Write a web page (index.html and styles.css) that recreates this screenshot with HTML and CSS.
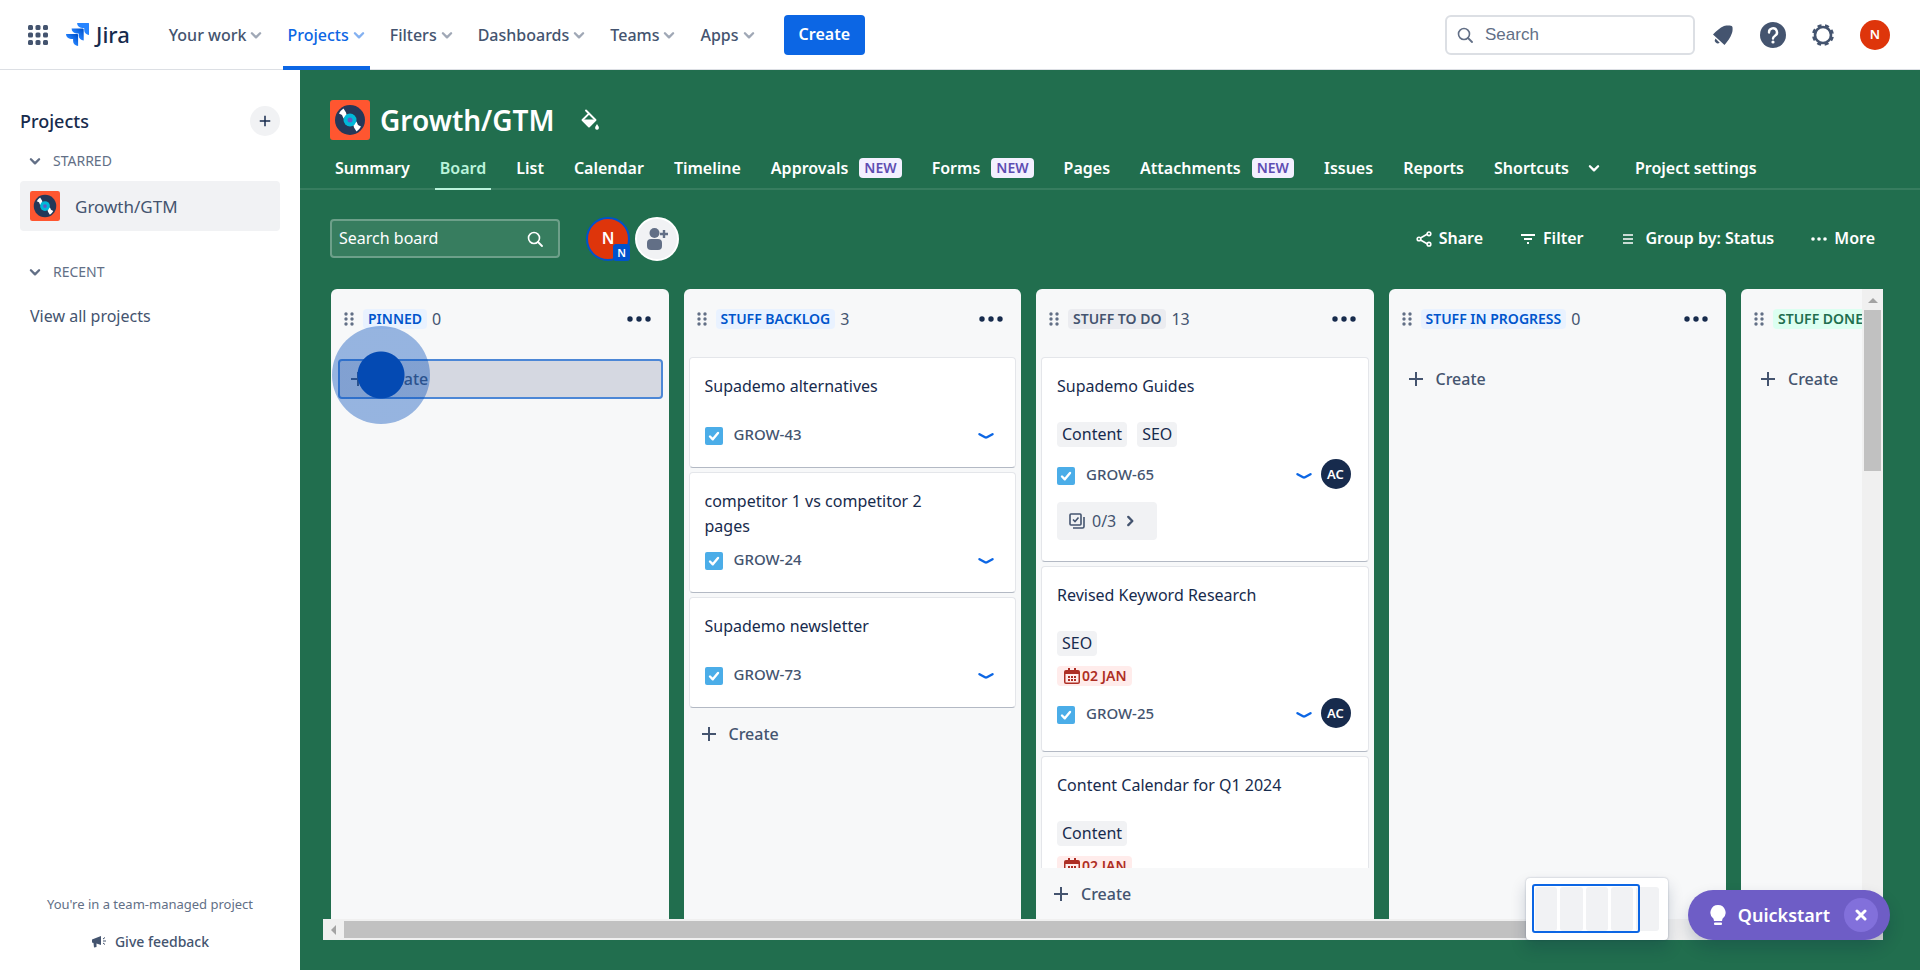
FILE: index.html
```html
<!DOCTYPE html>
<html lang="en">
<head>
    <meta charset="UTF-8" />
    <meta name="viewport" content="width=device-width, initial-scale=1" />
    <title>Growth/GTM - Board - Jira</title>
    <link rel="stylesheet" href="styles.css">
</head>
<body>

<!-- shared icons -->
<svg class="sprite" aria-hidden="true">
    <symbol id="chevron" viewBox="0 0 12 12"><path d="M2.500 4.500L6 8l3.500-3.500" fill="none" stroke="currentColor" stroke-width="2" stroke-linecap="round" stroke-linejoin="round"/></symbol>
    <symbol id="plus" viewBox="0 0 16 16"><path d="M8 1v14M1 8h14" fill="none" stroke="currentColor" stroke-width="2"/></symbol>
    <symbol id="search" viewBox="0 0 16 16"><circle cx="7" cy="7" r="5.5" fill="none" stroke="currentColor" stroke-width="1.6"/><path d="M11 11l4 4" stroke="currentColor" stroke-width="1.8" stroke-linecap="round"/></symbol>
    <symbol id="grip" viewBox="0 0 10 16"><g fill="#626f86"><circle cx="2" cy="3" r="1.7"/><circle cx="8" cy="3" r="1.7"/><circle cx="2" cy="8" r="1.7"/><circle cx="8" cy="8" r="1.7"/><circle cx="2" cy="13" r="1.7"/><circle cx="8" cy="13" r="1.7"/></g></symbol>
    <symbol id="dots" viewBox="0 0 24 6"><g fill="currentColor"><circle cx="3" cy="3" r="2.7"/><circle cx="12" cy="3" r="2.7"/><circle cx="21" cy="3" r="2.7"/></g></symbol>
    <symbol id="task" viewBox="0 0 18 18"><rect width="18" height="18" rx="2" fill="#4bade8"/><path d="M5 9.5l2.8 2.8L13 6" fill="none" stroke="#fff" stroke-width="2.4" stroke-linecap="round" stroke-linejoin="round"/></symbol>
    <symbol id="low" viewBox="0 0 16 8"><path d="M1.500 2.200L7 5.300q1 .5 2 0l5.500-3.100" fill="none" stroke="#0c66e4" stroke-width="2.400" stroke-linecap="round"/></symbol>
    <symbol id="calendar" viewBox="0 0 16 16"><path d="M4 0h2v2h4V0h2v2h2a2 2 0 0 1 2 2v10a2 2 0 0 1-2 2H2a2 2 0 0 1-2-2V4a2 2 0 0 1 2-2h2zM1.500 6v8q0 .5.5.5h12q.5 0 .5-.5V6z" fill="#ae2e24" fill-rule="evenodd"/><path d="M4 9h8M4 12h8" stroke="#ae2e24" stroke-width="1.800" stroke-dasharray="2 1"/></symbol>
    <symbol id="record" viewBox="0 0 40 40">
        <rect width="40" height="40" rx="3" fill="#ff5630"/>
        <circle cx="20" cy="20" r="15" fill="#253858"/>
        <path d="M9 13.500q1.500-3 4.500-5l2.500 4 1 4-3.500 2-1.500-3.500zM31 26.500q-1.500 3-4.500 5l-2.500-4-1-4 3.500-2 1.500 3.500z" fill="#fff"/>
        <circle cx="20" cy="20" r="6.500" fill="#00b8d9"/>
        <circle cx="20" cy="20" r="2.500" fill="#5e5bc7"/>
    </symbol>
</svg>

<header class="topbar">
    <button class="icon-btn switcher" aria-label="Switch to">
        <svg width="20" height="20" viewBox="0 0 20 20" fill="#44546f"><rect width="5" height="5" rx="1.500"/><rect x="7.500" width="5" height="5" rx="1.500"/><rect x="15" width="5" height="5" rx="1.500"/><rect y="7.500" width="5" height="5" rx="1.500"/><rect x="7.500" y="7.500" width="5" height="5" rx="1.500"/><rect x="15" y="7.500" width="5" height="5" rx="1.500"/><rect y="15" width="5" height="5" rx="1.500"/><rect x="7.500" y="15" width="5" height="5" rx="1.500"/><rect x="15" y="15" width="5" height="5" rx="1.500"/></svg>
    </button>
    <a class="logo" href="#">
        <svg width="23" height="23" viewBox="0 0 23 23" aria-hidden="true">
            <defs>
                <linearGradient id="g1" x1="1" y1="0" x2="0.400" y2="0.600"><stop offset="0.150" stop-color="#0052cc"/><stop offset="1" stop-color="#2684ff"/></linearGradient>
            </defs>
            <path d="M22.300 0H11.100a5 5 0 0 0 5 5h2.100v2a5 5 0 0 0 5 5V1a1 1 0 0 0-.9-1z" fill="#2684ff"/>
            <path d="M16.800 5.500H5.600a5 5 0 0 0 5 5h2.100v2a5 5 0 0 0 5 5V6.500a1 1 0 0 0-.9-1z" fill="url(#g1)"/>
            <path d="M11.200 11H0a5 5 0 0 0 5 5h2.100v2a5 5 0 0 0 5 5V12a1 1 0 0 0-.9-1z" fill="url(#g1)"/>
        </svg>
        <span>Jira</span>
    </a>
    <nav class="topnav">
        <a href="#">Your work <svg class="chev"><use href="#chevron"/></svg></a>
        <a href="#" class="active">Projects <svg class="chev"><use href="#chevron"/></svg></a>
        <a href="#">Filters <svg class="chev"><use href="#chevron"/></svg></a>
        <a href="#">Dashboards <svg class="chev"><use href="#chevron"/></svg></a>
        <a href="#">Teams <svg class="chev"><use href="#chevron"/></svg></a>
        <a href="#">Apps <svg class="chev"><use href="#chevron"/></svg></a>
    </nav>
    <button class="create-btn">Create</button>
    <div class="topbar-right">
        <label class="search">
            <svg width="16" height="16"><use href="#search"/></svg>
            <input type="text" placeholder="Search" aria-label="Search">
        </label>
        <button class="icon-btn" aria-label="Notifications">
            <svg width="24" height="24" viewBox="0 0 24 24" fill="#44546f"><path d="M2 11.500C5 8.500 9 4.500 13 3c3-.7 5-.6 7-.3q1.300.3 1.500 1.500c.2 2 .2 4-.7 6.300-1.300 4-4.300 8-7.300 11.500z"/><path d="M4.500 15.500a3 3 0 0 0 4.200 4.200z"/></svg>
        </button>
        <button class="icon-btn" aria-label="Help">
            <svg width="26" height="26" viewBox="0 0 26 26"><circle cx="13" cy="13" r="13" fill="#44546f"/><path d="M9 10.500a4 4 0 1 1 6 3.300c-1.400.9-2 1.200-2 2.700" fill="none" stroke="#fff" stroke-width="2.400" stroke-linecap="round"/><circle cx="13" cy="20" r="1.600" fill="#fff"/></svg>
        </button>
        <button class="icon-btn" aria-label="Settings">
            <svg width="24" height="24" viewBox="0 0 24 24"><circle cx="12" cy="12" r="8" fill="none" stroke="#44546f" stroke-width="2.600"/><circle cx="12" cy="12" r="9.550" fill="none" stroke="#44546f" stroke-width="2.800" stroke-dasharray="4 3.500" stroke-dashoffset="-1.750"/></svg>
        </button>
        <button class="avatar profile" aria-label="Your profile">N</button>
    </div>
</header>

<div class="layout">
    <aside class="sidebar">
        <div class="sidebar-head">
            <h2>Projects</h2>
            <button class="add-btn" aria-label="Create project"><svg width="12" height="12"><use href="#plus"/></svg></button>
        </div>
        <button class="group-head"><svg class="chev"><use href="#chevron"/></svg>STARRED</button>
        <a class="project-link" href="#"><svg width="30" height="30"><use href="#record"/></svg>Growth/GTM</a>
        <button class="group-head recent"><svg class="chev"><use href="#chevron"/></svg>RECENT</button>
        <a class="view-all" href="#">View all projects</a>
        <div class="sidebar-foot">
            <p>You're in a team-managed project</p>
            <button class="feedback">
                <svg width="16" height="14" viewBox="0 0 16 14" fill="#44546f"><path d="M1 4.500L10 1v9L5.500 8.500V12L3 12.500 2.500 8 1 7.500z"/><path d="M12 4l2-1.500M12 6h3M12 8l2 1.500" stroke="#44546f"/></svg>
                Give feedback
            </button>
        </div>
    </aside>

    <main class="main">
        <div class="title-row">
            <svg width="40" height="40"><use href="#record"/></svg>
            <h1>Growth/GTM</h1>
            <button class="icon-btn" aria-label="Change background">
                <svg width="20" height="22" viewBox="0 0 20 22"><path d="M6 1.500l9.500 9.500-6.500 6.500L2.500 11l6.200-6.200" fill="none" stroke="#fff" stroke-width="1.900" stroke-linejoin="round" stroke-linecap="round"/><path d="M2.500 10.500h13L9 17.500z" fill="#fff"/><path d="M17 15q2.300 3 1.800 4.400a1.900 1.900 0 0 1-3.600 0q-.4-1.400 1.800-4.400z" fill="#fff"/></svg>
            </button>
        </div>
        <nav class="tabs">
            <a href="#">Summary</a>
            <a href="#" class="active">Board</a>
            <a href="#">List</a>
            <a href="#">Calendar</a>
            <a href="#">Timeline</a>
            <a href="#">Approvals<span class="new">NEW</span></a>
            <a href="#">Forms<span class="new">NEW</span></a>
            <a href="#">Pages</a>
            <a href="#">Attachments<span class="new">NEW</span></a>
            <a href="#">Issues</a>
            <a href="#">Reports</a>
            <a href="#" class="shortcuts">Shortcuts<svg class="chev"><use href="#chevron"/></svg></a>
            <a href="#">Project settings</a>
        </nav>

        <div class="toolbar">
            <label class="board-search">
                <input type="text" placeholder="Search board" aria-label="Search board">
                <svg width="16" height="16"><use href="#search"/></svg>
            </label>
            <button class="avatar member" aria-label="Filter by N">N<span class="member-badge">N</span></button>
            <button class="avatar add-people" aria-label="Add people">
                <svg width="22" height="24" viewBox="0 0 22 24" fill="#626f86"><circle cx="8.500" cy="6" r="5"/><rect x="1" y="12" width="15" height="11" rx="4"/><path d="M18 3v8M14 7h8" stroke="#626f86" stroke-width="2.400"/></svg>
            </button>
            <div class="actions">
                <button><svg width="16" height="16" viewBox="0 0 16 16" fill="none" stroke="#fff" stroke-width="1.600"><path d="M11.500 3L4.500 7M4.500 9l7 4"/><circle cx="13" cy="2.800" r="1.800"/><circle cx="3" cy="8" r="1.800"/><circle cx="13" cy="13.200" r="1.800"/></svg>Share</button>
                <button><svg width="16" height="16" viewBox="0 0 16 16" stroke="#fff" stroke-width="1.800"><path d="M1 4h14M4 8h8M7 12h2"/></svg>Filter</button>
                <button class="group-by"><svg width="10" height="10" viewBox="0 0 10 10" stroke="#fff" stroke-width="1.500"><path d="M0 1h10M0 5h10M0 9h10"/></svg>Group by: Status</button>
                <button><svg width="16" height="4"><use href="#dots"/></svg>More</button>
            </div>
        </div>

        <div class="board-frame">
            <div class="columns">
                <section class="column">
                    <header class="column-head">
                        <svg width="10" height="16"><use href="#grip"/></svg>
                        <h3 class="status blue">PINNED</h3><span class="count">0</span>
                        <button class="column-menu" aria-label="Column actions"><svg width="24" height="6"><use href="#dots"/></svg></button>
                    </header>
                    <button class="column-create focused"><svg width="16" height="16"><use href="#plus"/></svg>Create<span class="click-marker"></span></button>
                </section>

                <section class="column">
                    <header class="column-head">
                        <svg width="10" height="16"><use href="#grip"/></svg>
                        <h3 class="status blue">STUFF BACKLOG</h3><span class="count">3</span>
                        <button class="column-menu" aria-label="Column actions"><svg width="24" height="6"><use href="#dots"/></svg></button>
                    </header>
                    <div class="cards">
                        <article class="card">
                            <p class="card-title">Supademo alternatives</p>
                            <div class="card-row"><svg class="task"><use href="#task"/></svg><a href="#">GROW-43</a><svg class="low"><use href="#low"/></svg></div>
                        </article>
                        <article class="card">
                            <p class="card-title">competitor 1 vs competitor 2 pages</p>
                            <div class="card-row"><svg class="task"><use href="#task"/></svg><a href="#">GROW-24</a><svg class="low"><use href="#low"/></svg></div>
                        </article>
                        <article class="card">
                            <p class="card-title">Supademo newsletter</p>
                            <div class="card-row"><svg class="task"><use href="#task"/></svg><a href="#">GROW-73</a><svg class="low"><use href="#low"/></svg></div>
                        </article>
                    </div>
                    <button class="column-create"><svg width="16" height="16"><use href="#plus"/></svg>Create</button>
                </section>

                <section class="column">
                    <header class="column-head">
                        <svg width="10" height="16"><use href="#grip"/></svg>
                        <h3 class="status grey">STUFF TO DO</h3><span class="count">13</span>
                        <button class="column-menu" aria-label="Column actions"><svg width="24" height="6"><use href="#dots"/></svg></button>
                    </header>
                    <div class="cards">
                        <article class="card">
                            <p class="card-title">Supademo Guides</p>
                            <div class="tags"><span>Content</span><span>SEO</span></div>
                            <div class="card-row"><svg class="task"><use href="#task"/></svg><a href="#">GROW-65</a><svg class="low"><use href="#low"/></svg><span class="avatar assignee">AC</span></div>
                            <button class="subtasks">
                                <svg width="16" height="16" viewBox="0 0 16 16" fill="none" stroke="#44546f" stroke-width="1.600"><rect x="1" y="1" width="11" height="11" rx="1"/><path d="M4 6.500l2 2 3.500-4M15 4v9.500q0 1.500-1.500 1.500H4"/></svg>
                                0/3
                                <svg class="chev next"><use href="#chevron"/></svg>
                            </button>
                        </article>
                        <article class="card">
                            <p class="card-title">Revised Keyword Research</p>
                            <div class="tags"><span>SEO</span></div>
                            <div class="due"><svg width="16" height="16"><use href="#calendar"/></svg>02 JAN</div>
                            <div class="card-row"><svg class="task"><use href="#task"/></svg><a href="#">GROW-25</a><svg class="low"><use href="#low"/></svg><span class="avatar assignee">AC</span></div>
                        </article>
                        <article class="card">
                            <p class="card-title">Content Calendar for Q1 2024</p>
                            <div class="tags"><span>Content</span></div>
                            <div class="due"><svg width="16" height="16"><use href="#calendar"/></svg>02 JAN</div>
                        </article>
                    </div>
                    <button class="column-create"><svg width="16" height="16"><use href="#plus"/></svg>Create</button>
                </section>

                <section class="column">
                    <header class="column-head">
                        <svg width="10" height="16"><use href="#grip"/></svg>
                        <h3 class="status blue">STUFF IN PROGRESS</h3><span class="count">0</span>
                        <button class="column-menu" aria-label="Column actions"><svg width="24" height="6"><use href="#dots"/></svg></button>
                    </header>
                    <button class="column-create"><svg width="16" height="16"><use href="#plus"/></svg>Create</button>
                </section>

                <section class="column">
                    <header class="column-head">
                        <svg width="10" height="16"><use href="#grip"/></svg>
                        <h3 class="status green">STUFF DONE</h3>
                    </header>
                    <button class="column-create"><svg width="16" height="16"><use href="#plus"/></svg>Create</button>
                </section>
            </div>
            <div class="scroll-y"><svg width="10" height="5" viewBox="0 0 10 5"><path d="M0 5l5-5 5 5z" fill="#a3a3a3"/></svg><div class="thumb"></div></div>
            <div class="scroll-x"><svg width="5" height="10" viewBox="0 0 5 10"><path d="M5 0L0 5l5 5z" fill="#a3a3a3"/></svg><div class="thumb"></div></div>
            <div class="scroll-corner"></div>
        </div>

        <div class="floating">
            <div class="minimap">
                <span></span><span></span><span></span><span></span><span></span>
                <div class="minimap-view"></div>
            </div>
            <div class="quickstart">
                <button class="quickstart-open">
                    <svg width="16" height="20" viewBox="0 0 16 20" fill="#fff"><path d="M8 0a7.600 7.600 0 0 1 4.500 13.700L12 16H4l-.5-2.300A7.600 7.600 0 0 1 8 0z"/><rect x="4" y="17.500" width="8" height="2.500" rx="1"/></svg>
                    Quickstart
                </button>
                <button class="quickstart-close" aria-label="Close"><svg width="12" height="12" viewBox="0 0 12 12"><path d="M2 2l8 8M10 2l-8 8" stroke="#fff" stroke-width="3" stroke-linecap="round"/></svg></button>
            </div>
        </div>
    </main>
</div>
</body>
</html>
```

FILE: styles.css
```css
* {
    box-sizing: border-box;
}
body {
    margin: 0;
    height: 100vh;
    display: flex;
    flex-direction: column;
    overflow: hidden;
    font-family: "Noto Sans", "Open Sans", sans-serif;
    font-size: 16px;
    line-height: 25px;
    color: #172b4d;
    background-color: #fff;
}
h1, h2, h3, p {
    margin: 0;
}
a {
    color: inherit;
    text-decoration: none;
}
button {
    font: inherit;
    color: inherit;
    background: none;
    border: none;
    padding: 0;
    cursor: pointer;
}
svg {
    display: block;
    flex: none;
}
.sprite {
    position: absolute;
    width: 0;
    height: 0;
}
.chev {
    width: 14px;
    height: 14px;
}
.icon-btn {
    display: flex;
    align-items: center;
    justify-content: center;
}
.avatar {
    display: flex;
    align-items: center;
    justify-content: center;
    border-radius: 50%;
    color: #fff;
    font-weight: 600;
}

/* top bar */
.topbar {
    display: flex;
    align-items: center;
    height: 70px;
    flex: none;
    padding: 0 30px 0 28px;
    border-bottom: 1px solid #dcdfe4;
}
.logo {
    display: flex;
    align-items: center;
    gap: 7px;
    margin: 0 35px 0 18px;
    font-size: 22px;
    font-weight: 500;
}
.topnav {
    display: flex;
    align-self: stretch;
    gap: 16px;
    color: #44546f;
    font-weight: 500;
}
.topnav a {
    display: flex;
    align-items: center;
    gap: 3px;
    padding: 4px 4px 0;
    margin-bottom: -1px;
    border-bottom: 4px solid transparent;
}
.topnav .chev {
    opacity: 0.5;
}
.topnav .active {
    color: #0c66e4;
    border-bottom-color: #0c66e4;
}
.create-btn {
    height: 40px;
    margin-left: 24px;
    padding: 0 15px;
    border-radius: 4px;
    background-color: #0c66e4;
    color: #fff;
    font-weight: 600;
}
.topbar-right {
    display: flex;
    align-items: center;
    gap: 25px;
    margin-left: auto;
}
.search {
    display: flex;
    align-items: center;
    gap: 12px;
    width: 250px;
    height: 40px;
    margin-right: -9px;
    padding: 0 10px;
    border: 2px solid #dcdfe4;
    border-radius: 6px;
    color: #626f86;
}
.search input {
    width: 100%;
    border: none;
    outline: none;
    background: none;
    padding: 0;
    font: 17px "Liberation Sans", Arial, sans-serif;
}
.search input::placeholder {
    color: #626f86;
}
.profile {
    width: 30px;
    height: 30px;
    background-color: #de350b;
    font-size: 13px;
}

/* sidebar */
.layout {
    display: flex;
    flex: 1;
    min-height: 0;
}
.sidebar {
    display: flex;
    flex-direction: column;
    width: 300px;
    flex: none;
    padding: 36px 20px 16px;
}
.sidebar-head {
    display: flex;
    align-items: center;
    justify-content: space-between;
}
.sidebar-head h2 {
    font-size: 18px;
    font-weight: 500;
}
.add-btn {
    display: flex;
    align-items: center;
    justify-content: center;
    width: 30px;
    height: 30px;
    border-radius: 50%;
    background-color: #f1f2f4;
}
.group-head {
    display: flex;
    align-items: center;
    gap: 11px;
    padding: 0 8px;
    margin: 12px 0 8px;
    color: #626f86;
    font-size: 14px;
}
.recent {
    margin-top: 28px;
}
.project-link {
    display: flex;
    align-items: center;
    gap: 15px;
    height: 50px;
    padding: 0 10px;
    border-radius: 4px;
    background-color: #f1f2f4;
    color: #44546f;
    font-size: 17px;
}
.view-all {
    padding: 12px 10px;
    color: #44546f;
}
.sidebar-foot {
    display: flex;
    flex-direction: column;
    align-items: center;
    gap: 12px;
    margin-top: auto;
    color: #626f86;
    font-size: 13px;
}
.feedback {
    display: flex;
    align-items: center;
    gap: 8px;
    color: #44546f;
    font-size: 14px;
    font-weight: 500;
}

/* project header */
.main {
    position: relative;
    display: flex;
    flex-direction: column;
    flex: 1;
    min-width: 0;
    padding-bottom: 30px;
    background-color: #216e4e;
    color: #fff;
}
.title-row {
    display: flex;
    align-items: center;
    gap: 10px;
    height: 70px;
    padding: 30px 30px 0;
}
.title-row h1 {
    margin-right: 15px;
    font-size: 28px;
    font-weight: 600;
}
.tabs {
    display: flex;
    gap: 20px;
    height: 50px;
    padding: 0 30px;
    border-bottom: 2px solid #377d5f;
    font-weight: 600;
    white-space: nowrap;
}
.tabs a {
    display: flex;
    align-items: center;
    gap: 11px;
    padding: 8px 5px 0;
    margin-bottom: -2px;
    border-bottom: 2px solid transparent;
}
.tabs .active {
    color: #baf3db;
    border-bottom-color: #baf3db;
}
.tabs .shortcuts {
    gap: 18px;
    margin-right: 4px;
}
.new {
    padding: 0 5px;
    border-radius: 4px;
    background-color: #f3f0ff;
    color: #5e4db2;
    font-size: 14px;
    line-height: 20px;
    font-weight: 600;
}

/* board toolbar */
.toolbar {
    display: flex;
    align-items: center;
    height: 99px;
    flex: none;
    padding: 0 45px 2px 30px;
}
.board-search {
    display: flex;
    align-items: center;
    width: 230px;
    height: 39px;
    margin-right: 26px;
    padding: 0 15px 0 7px;
    border: 2px solid #6da08a;
    border-radius: 4px;
    background-color: #377d5f;
}
.board-search input {
    width: 100%;
    min-width: 0;
    border: none;
    outline: none;
    background: none;
    padding: 0;
    font: inherit;
    color: #fff;
}
.board-search input::placeholder {
    color: #fff;
}
.member, .add-people {
    width: 44px;
    height: 44px;
}
.member {
    position: relative;
    border: 2px solid #0052cc;
    background-color: #de350b;
}
.member-badge {
    position: absolute;
    right: -2px;
    bottom: -2px;
    width: 17px;
    height: 17px;
    border-radius: 3px;
    background-color: #0052cc;
    font-size: 11px;
    line-height: 17px;
}
.add-people {
    margin-left: 5px;
    border: 2px solid #fff;
    background-color: #f1f2f4;
}
.actions {
    display: flex;
    gap: 37px;
    margin-left: auto;
    font-weight: 600;
}
.actions button {
    display: flex;
    align-items: center;
    gap: 7px;
}
.actions .group-by {
    gap: 12px;
    margin-left: 3px;
}

/* board */
.board-frame {
    display: grid;
    grid-template-columns: minmax(0, 1fr) 21px;
    grid-template-rows: minmax(0, 1fr) 21px;
    flex: 1;
    min-height: 0;
    margin: 0 37px 0 23px;
}
.columns {
    display: flex;
    gap: 15px;
    padding-left: 8px;
    overflow: hidden;
}
/* four whole columns and a peek of the fifth */
.column {
    display: flex;
    flex-direction: column;
    flex: 0 0 calc((100% - 181px) / 4);
    min-height: 0;
    padding-bottom: 4px;
    border-radius: 6px 6px 0 0;
    background-color: #f7f8f9;
    color: #44546f;
}
.column-head {
    display: flex;
    align-items: center;
    height: 60px;
    flex: none;
    margin-bottom: 8px;
    padding: 0 18px 0 13px;
}
.status {
    margin: 0 5px 0 9px;
    padding: 0 5px;
    border-radius: 4px;
    font-size: 14px;
    line-height: 20px;
    font-weight: 600;
    white-space: nowrap;
}
.blue {
    background-color: #e9f2ff;
    color: #0055cc;
}
.grey {
    background-color: #ebecf0;
    color: #44546f;
}
.green {
    background-color: #dcfff1;
    color: #216e4e;
}
.column-menu {
    margin-left: auto;
    color: #172b4d;
}
.cards {
    display: flex;
    flex-direction: column;
    gap: 4px;
    min-height: 0;
    padding: 0 5px;
    overflow: hidden;
}
.card {
    flex: none;
    padding: 16px 15px 18px;
    border: 1px solid #e4e6ea;
    border-bottom-color: #b3b9c4;
    border-radius: 4px;
    background-color: #fff;
}
.card-title {
    min-height: 40px;
    padding-right: 50px;
    color: #172b4d;
}
.card-row {
    display: flex;
    align-items: center;
    height: 30px;
    margin-top: 5px;
    font-size: 15px;
    font-weight: 500;
}
.card-row a {
    margin: 0 auto 0 11px;
}
.task {
    width: 18px;
    height: 18px;
    margin-top: 3px;
}
.low {
    width: 16px;
    height: 8px;
    margin: 4px 6px 0 0;
}
.assignee {
    width: 30px;
    height: 30px;
    margin: 0 2px 0 3px;
    background-color: #172b4d;
    font-size: 13px;
}
.tags {
    display: flex;
    gap: 10px;
    margin-top: 8px;
    color: #172b4d;
}
.tags span {
    padding: 0 5px;
    border-radius: 4px;
    background-color: #f1f2f4;
}
.tags ~ .card-row {
    margin-top: 12px;
}
.tags ~ .card-row:last-child {
    margin-bottom: 5px;
}
.due {
    display: flex;
    align-items: center;
    width: fit-content;
    gap: 2px;
    margin-top: 10px;
    padding: 0 5px 0 7px;
    border-radius: 4px;
    background-color: #ffeceb;
    color: #ae2e24;
    font-size: 14px;
    line-height: 20px;
    font-weight: 600;
}
.subtasks {
    display: flex;
    align-items: center;
    gap: 7px;
    width: 100px;
    height: 38px;
    margin: 13px 0 3px;
    padding: 0 12px;
    border-radius: 4px;
    background-color: #f1f2f4;
}
.next {
    transform: rotate(-90deg);
}
.column-create {
    position: relative;
    display: flex;
    align-items: center;
    gap: 12px;
    height: 40px;
    flex: none;
    margin: 2px 6px 1px 7px;
    padding: 0 10px;
    border: 2px solid transparent;
    border-radius: 4px;
    font-weight: 500;
}
.cards + .column-create {
    margin: 6px 6px 1px 5px;
}
.focused {
    border-color: #4c87d6;
    background-color: #d5d8e1;
}
.click-marker {
    position: absolute;
    left: -8px;
    top: -35px;
    width: 98px;
    height: 98px;
    border-radius: 50%;
    background: radial-gradient(circle, #044ab3 0 23px, rgba(4, 78, 186, 0.4) 24px);
}

/* scroll bars */
.scroll-y, .scroll-x {
    display: flex;
    align-items: center;
    background-color: #f0f0f0;
}
.scroll-y {
    flex-direction: column;
    padding-top: 9px;
}
.scroll-x {
    padding-left: 8px;
}
.thumb {
    background-color: #c1c1c1;
}
.scroll-y .thumb {
    width: 17px;
    height: 26%;
    margin-top: 7px;
}
.scroll-x .thumb {
    width: 82%;
    height: 17px;
    margin-left: 8px;
}
.scroll-corner {
    background-color: #dcdcdc;
}

/* widgets over the board */
.floating {
    position: absolute;
    right: 30px;
    bottom: 30px;
    display: flex;
    align-items: flex-end;
    gap: 20px;
}
.minimap {
    position: relative;
    display: flex;
    gap: 3px;
    width: 142px;
    height: 62px;
    padding: 9px;
    border-radius: 4px;
    background-color: #fff;
    box-shadow: 0 8px 16px rgba(9, 30, 66, 0.2), 0 0 2px rgba(9, 30, 66, 0.3);
}
.minimap span {
    flex: 1;
    border-radius: 3px;
    background-color: #f1f2f4;
}
.minimap-view {
    position: absolute;
    left: 6px;
    top: 6px;
    width: 108px;
    height: 49px;
    border: 2px solid #0c66e4;
    border-radius: 3px;
}
.quickstart {
    display: flex;
    align-items: center;
    gap: 14px;
    height: 50px;
    padding: 0 12px 0 22px;
    border-radius: 25px;
    background-color: #6e5dc6;
    box-shadow: 0 8px 16px rgba(9, 30, 66, 0.2);
}
.quickstart-open {
    display: flex;
    align-items: center;
    gap: 12px;
    font-size: 18px;
    font-weight: 600;
}
.quickstart-close {
    display: flex;
    align-items: center;
    justify-content: center;
    width: 34px;
    height: 34px;
    border-radius: 50%;
    background-color: #8270db;
}
```
